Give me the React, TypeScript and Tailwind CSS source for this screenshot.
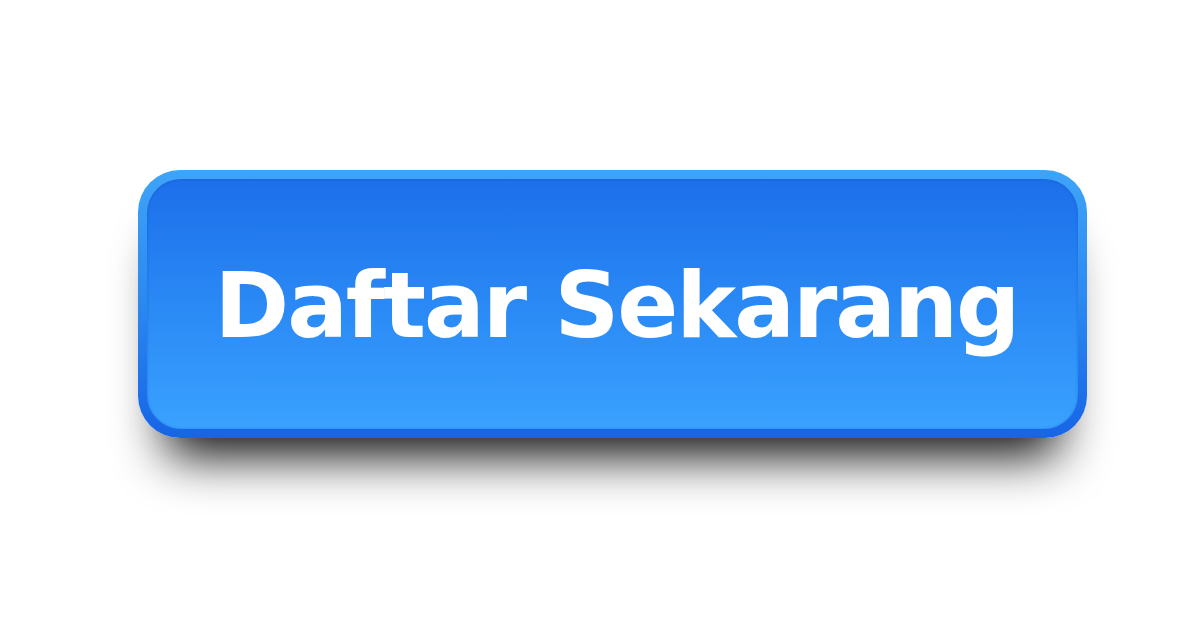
export default function App() {
  return (
    <div className="w-[1200px] h-[628px] bg-white flex items-start justify-start pt-[170px] pl-[138px]">
      {/* outer rim */}
      <div className="w-[949px] h-[268px] rounded-[42px] p-[9px] bg-gradient-to-b from-[#3ea4f8] via-[#2b88f0] to-[#1864e6] shadow-[0_46px_50px_-28px_rgba(0,0,0,0.95)]">
        <button className="w-full h-full rounded-[34px] bg-gradient-to-b from-[#1d6fea] to-[#3aa2ff] shadow-[inset_0_0_3px_rgba(10,60,160,0.35)] flex items-center justify-center text-white font-bold text-[90px] tracking-[-2px] leading-none pt-[4px] pl-[8px]" style={{ fontFamily: "'DejaVu Sans', 'Noto Sans', sans-serif" }}>
          Daftar Sekarang
        </button>
      </div>
    </div>
  );
}
